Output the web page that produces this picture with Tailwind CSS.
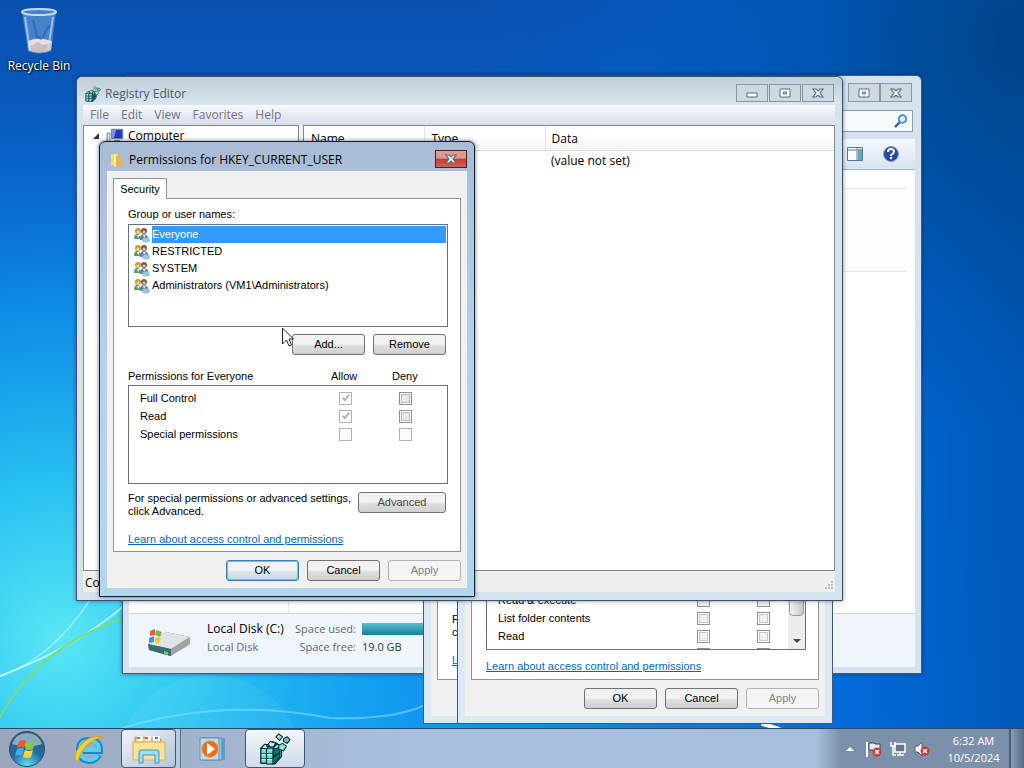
<!DOCTYPE html>
<html lang="en">
<head>
    <meta charset="UTF-8">
    <meta name="viewport" content="width=device-width, initial-scale=1.0">
    <title>Desktop - Registry Editor</title>
    <script src="https://cdn.jsdelivr.net/npm/@tailwindcss/browser@4"></script>
</head>
<body class="relative flex flex-col h-screen overflow-hidden bg-[#0a5fc8] font-['Open_Sans','Noto_Sans',sans-serif] text-xs text-black">

    <!-- Shared icons -->
    <svg class="hidden" aria-hidden="true">
        <symbol id="icon-registry" viewBox="0 0 34 34">
            <g stroke="#062c30" stroke-width="1.1" stroke-linejoin="round">
                <path d="m2 16 4-4 5 1 3-4 5 2 5 3v11l-7 8-15-1Z" fill="#2fa9a2"/>
                <path d="m2 16 4-4 5 1-3 4Zm6-2 4-5 6 2-3 4Zm7 2 4-4 5 2-4 4Z" fill="#b9f3ec"/>
                <path d="M2 17h6v5H2Zm0 5h6v5H2Zm0 5h6v5H2Zm6-10h7v5H8Zm0 5h7v5H8Zm0 5h7v6H8Z" fill="#6fdcd2"/>
                <path d="m15 19 7-5v7l-7 4Zm0 7 7-5v5l-7 7Z" fill="#0d7477"/>
                <path d="m18 4 3-3 4 3-3 4Z" fill="#b4d5d8"/>
                <path d="m26 6 4-2 3 3-3 4-4-2Z" fill="#59c8c0"/>
                <path d="m21 13 4-2 4 3-3 5-5-2Z" fill="#8be8de"/>
            </g>
            <path d="m3 18 4 0M3 23h4M3 28h4M9 18h5M9 23h5M9 28h5" stroke="#dffffa" stroke-width="1.2"/>
        </symbol>
        <symbol id="icon-users" viewBox="0 0 16 16">
            <path d="M0 12q0-5 3-5 4 0 4 5Z" fill="#5e9c63"/>
            <path d="M6 13q0-6 4-6t5 6Z" fill="#4f83ad"/>
            <circle cx="4" cy="4" r="3" fill="#c89a3c"/>
            <circle cx="4" cy="5" r="1.500" fill="#f3d9a4"/>
            <circle cx="10" cy="4" r="3" fill="#7b5e48"/>
            <circle cx="10" cy="5" r="1.500" fill="#e8c39a"/>
            <path d="m3 8 1 3 2-3Zm6 0 1 3 2-3Z" fill="#e8f2f2"/>
            <ellipse cx="12" cy="13" rx="4" ry="2.500" fill="#9cc4dd"/>
        </symbol>
        <symbol id="icon-max" viewBox="0 0 12 10">
            <path d="M1 1h10v8H1Z" fill="#fff" stroke="#5c6a7c"/>
            <path d="M4.500 4h3v2h-3Z" fill="#dbe6ee" stroke="#5c6a7c"/>
        </symbol>
        <symbol id="icon-close" viewBox="0 0 12 10">
            <path d="M1 1h3l2 2 2-2h3L8 5l3 4H8L6 7 4 9H1l3-4Z" fill="#fff" stroke="#5c6a7c" stroke-width="1.200"/>
        </symbol>
    </svg>

    <!-- Wallpaper -->
    <svg class="absolute inset-0 w-full h-full" viewBox="0 0 1024 768" preserveAspectRatio="none" aria-hidden="true">
        <defs>
            <linearGradient id="sky" x1="0" y1="0" x2="0" y2="1">
                <stop offset="0" stop-color="#0a4fae"/>
                <stop offset=".3" stop-color="#0868d0"/>
                <stop offset=".6" stop-color="#0a86e6"/>
                <stop offset="1" stop-color="#14a0f6"/>
            </linearGradient>
            <radialGradient id="glow" gradientUnits="userSpaceOnUse" cx="60" cy="640" r="520">
                <stop offset="0" stop-color="#5ae6f4"/>
                <stop offset=".3" stop-color="#2cc8f2" stop-opacity=".9"/>
                <stop offset=".65" stop-color="#129cee" stop-opacity=".6"/>
                <stop offset="1" stop-color="#0a6ad2" stop-opacity="0"/>
            </radialGradient>
            <linearGradient id="shade" x1="0" y1="0" x2="1" y2="0">
                <stop offset=".45" stop-color="#0058bc" stop-opacity="0"/>
                <stop offset=".82" stop-color="#0066d8" stop-opacity=".9"/>
                <stop offset="1" stop-color="#0058b8"/>
            </linearGradient>
            <radialGradient id="corner" gradientUnits="userSpaceOnUse" cx="1024" cy="40" r="400">
                <stop offset="0" stop-color="#004488"/>
                <stop offset="1" stop-color="#004a98" stop-opacity="0"/>
            </radialGradient>
        </defs>
        <path d="M0 0h1024v768H0Z" fill="url(#sky)"/>
        <path d="M0 0h1024v768H0Z" fill="url(#glow)"/>
        <path d="M0 0h1024v768H0Z" fill="url(#shade)"/>
        <path d="M0 0h1024v768H0Z" fill="url(#corner)"/>
        <circle cx="210" cy="770" r="95" fill="#fff" opacity=".06"/>
        <g fill="none" stroke-linecap="round">
            <path d="M0 676Q50 660 90 600" stroke="#c9f8fc" stroke-width="2" opacity=".5"/>
            <path d="M0 676Q75 648 125 605" stroke="#d5fafa" stroke-width="2" opacity=".7"/>
            <path d="M0 717Q40 645 125 618" stroke="#79df72" stroke-width="2"/>
            <path d="M110 732Q215 696 330 718Q390 720 423 706" stroke="#8fe6fb" stroke-width="2" opacity=".5"/>
            <path d="M763 724l16 5" stroke="#fff" stroke-width="4"/>
        </g>
    </svg>

    <main class="relative flex-1">

        <!-- Desktop shortcut -->
        <div class="absolute left-0 top-2 w-[78px] flex flex-col items-center">
            <svg class="w-10 h-12" viewBox="0 0 40 48" aria-hidden="true">
                <path d="M3 4h34l-5 39q-12 5-23 0Z" fill="#79a9df" fill-opacity=".55"/>
                <path d="m9 33q10-5 24 0l-1 9q-12 5-22 0Z" fill="#e9dfe4"/>
                <path d="m11 38 8-4 5 3 8-2v7q-11 4-21 1Z" fill="#cdbfb7"/>
                <path d="M6 9l5 34M34 9l-5 33" stroke="#d5e8fb" stroke-width="2" opacity=".6"/>
                <path d="m14 12 4 17 5 2M31 17q-5 6-7 12" stroke="#2c5ca8" stroke-width="2" fill="none" opacity=".7"/>
                <ellipse cx="20" cy="4" rx="17" ry="3" fill="#497fc5" stroke="#c6d9ec" stroke-width="2"/>
            </svg>
            <span class="text-[12px] leading-5 text-white [text-shadow:1px_1px_2px_#000,0_0_2px_#000]">Recycle Bin</span>
        </div>

        <!-- Windows Explorer -->
        <section class="absolute left-[122px] top-[75px] w-[800px] h-[599px] flex flex-col rounded-t-md border border-[#3d5a78] bg-[#d6e3ee] px-[6px] pb-[6px] shadow-[0_0_4px_rgba(0,30,70,.5)]">
            <div class="flex justify-end h-[34px] pt-[7px] pr-[3px]">
                <button class="w-8 h-[19px] flex items-center justify-center border border-[#8796a5] bg-[#ccd9e3]" aria-label="Maximize"><svg class="w-3 h-2.5"><use href="#icon-max"/></svg></button>
                <button class="w-8 h-[19px] flex items-center justify-center border border-[#8796a5] bg-[#ccd9e3]" aria-label="Close"><svg class="w-3 h-2.5"><use href="#icon-close"/></svg></button>
            </div>
            <div class="flex justify-end pr-0.5 h-[29px]">
                <div class="w-48 h-[22px] flex items-center justify-between border border-[#8d9eb0] bg-[#f5fafd] px-1">
                    <input class="w-40 outline-none" type="text" aria-label="Search">
                    <svg class="w-3.5 h-3.5" viewBox="0 0 14 14" fill="none" aria-hidden="true"><path d="m1 13 5-5" stroke="#3f6c94" stroke-width="2.500"/><circle cx="8.500" cy="5" r="3.800" fill="#d9efff" stroke="#4d86c0" stroke-width="1.800"/></svg>
                </div>
            </div>
            <div class="flex items-center justify-end gap-5 h-[31px] pr-4 border-b border-[#a0b4c8] bg-linear-to-b from-[#f4f9fd] to-[#d6e4f2]">
                <button aria-label="Show the preview pane">
                    <svg class="w-4 h-[14px]" viewBox="0 0 16 14"><path d="M.5.5h15v13H.5Z" fill="#fff" stroke="#537891"/><path d="M0 3h10M10 0v14" stroke="#537891"/><path d="M11 2h4v11h-4Z" fill="#57aebb"/></svg>
                </button>
                <button aria-label="Get help">
                    <svg class="w-4 h-4" viewBox="0 0 16 16"><circle cx="8" cy="8" r="7.500" fill="#274a9a" stroke="#8f9dc0"/><path d="M5 6q0-3 3-3t3 2.500Q11 7 8 9v1" fill="none" stroke="#fff" stroke-width="2"/><circle cx="8" cy="12" r="1.200" fill="#fff"/></svg>
                </button>
            </div>
            <div class="flex flex-1 bg-white">
                <div class="w-40 border-r border-[#e2e6ee]"></div>
                <div class="flex-1 pr-2 pt-[18px]">
                    <div class="h-[84px] border-y border-[#e6e6e8] bg-[#fdfdfd]"></div>
                </div>
            </div>
            <div class="flex items-center h-[54px] pl-4 border-t border-[#ccd6e2] bg-[#f0f5fb]">
                <svg class="w-[46px] h-8 mr-4" viewBox="0 0 46 32" aria-hidden="true">
                    <path d="m3 19 18-12 24 5v7L25 31 4 25Z" fill="#777f82"/>
                    <path d="m3 19 18-12 24 5-19 12Z" fill="#e1e4e5"/>
                    <path d="m3 19 23 5v7L4 25Z" fill="#3b6d70"/>
                    <path d="m26 24 19-12v7L26 31Z" fill="#9fa5a7"/>
                    <path d="m19 26 4 1v3l-4-1Z" fill="#60d45c"/>
                    <path d="m5 6 5-2v6l-5 1Z" fill="#e4633a"/><path d="m11 5 6 2-2 5-5-2Z" fill="#79b942"/>
                    <path d="m4 13 5-2v6l-5 1Z" fill="#4b90cf"/><path d="m10 12 6 1-2 6-4-2Z" fill="#f5c73d"/>
                </svg>
                <div class="self-start pt-[6px] grid grid-cols-[81px_62px_1fr] gap-x-1.5 items-center leading-[18px] text-[#5a6779] text-[11px] whitespace-nowrap">
                    <span class="text-[12px] text-black">Local Disk (C:)</span>
                    <span class="text-right">Space used:</span>
                    <span class="w-48 h-3 bg-linear-to-b from-[#55bfcd] to-[#12829a]"></span>
                    <span>Local Disk</span>
                    <span class="text-right">Space free:</span>
                    <span class="text-[#1e395b]">19.0 GB</span>
                </div>
            </div>
        </section>

        <!-- Properties, behind -->
        <section class="absolute left-[423px] top-[268px] w-[376px] h-[456px] flex flex-col border border-[#3d5a78] bg-[#dce8f2] px-[7px] pb-[7px] pt-7 font-['Liberation_Sans',Arial,sans-serif] text-[11px]">
            <div class="flex-1 bg-[#f0f0f0] px-1.5 pb-9 flex flex-col">
                <div class="flex flex-col justify-end flex-1 border border-[#8f949c] bg-white pl-3.5 pb-3 leading-[13px]">
                    <p class="w-[228px] mb-[15px]">For special permissions or advanced settings, click Advanced.</p>
                    <a href="#" class="text-[#0b63b8] underline">Learn about access control and permissions</a>
                </div>
            </div>
        </section>

        <!-- Properties, in front -->
        <section class="absolute left-[457px] top-[268px] w-[376px] h-[456px] flex flex-col border border-[#3d5a78] bg-[#dce8f2] px-[7px] pb-[7px] pt-7 font-['Liberation_Sans',Arial,sans-serif] text-[11px]">
            <div class="flex flex-col flex-1 bg-[#f0f0f0] px-1.5 pb-[7px]">
                <div class="flex flex-col justify-end flex-1 border border-[#8f949c] bg-white pl-3.5 pb-[5px]">
                    <div class="flex items-end h-[98px] w-80 overflow-hidden border border-[#6b7078]">
                        <table class="flex-1 -mb-3.5">
                            <tr class="h-[18px]"><td class="pl-[11px]">Modify</td><td class="w-[60px]"><input type="checkbox" aria-label="Modify, allow" class="block appearance-none size-[13px] border border-[#8e8f8f] bg-[#eef0f2]"></td><td class="w-[31px]"><input type="checkbox" aria-label="Modify, deny" class="block appearance-none size-[13px] border border-[#8e8f8f] bg-[#eef0f2]"></td></tr>
                            <tr class="h-[18px]"><td class="pl-[11px]">Read &amp; execute</td><td><input type="checkbox" aria-label="Read and execute, allow" class="block appearance-none size-[13px] border border-[#8e8f8f] bg-[#eef0f2]"></td><td><input type="checkbox" aria-label="Read and execute, deny" class="block appearance-none size-[13px] border border-[#8e8f8f] bg-[#eef0f2]"></td></tr>
                            <tr class="h-[18px]"><td class="pl-[11px]">List folder contents</td><td><input type="checkbox" aria-label="List folder contents, allow" class="block appearance-none size-[13px] border border-[#8e8f8f] bg-[#eef0f2] shadow-[inset_0_0_0_1px_#fff,inset_0_0_0_2px_#c4c8cc]"></td><td><input type="checkbox" aria-label="List folder contents, deny" class="block appearance-none size-[13px] border border-[#8e8f8f] bg-[#eef0f2] shadow-[inset_0_0_0_1px_#fff,inset_0_0_0_2px_#c4c8cc]"></td></tr>
                            <tr class="h-[18px]"><td class="pl-[11px]">Read</td><td><input type="checkbox" aria-label="Read, allow" class="block appearance-none size-[13px] border border-[#8e8f8f] bg-[#eef0f2] shadow-[inset_0_0_0_1px_#fff,inset_0_0_0_2px_#c4c8cc]"></td><td><input type="checkbox" aria-label="Read, deny" class="block appearance-none size-[13px] border border-[#8e8f8f] bg-[#eef0f2] shadow-[inset_0_0_0_1px_#fff,inset_0_0_0_2px_#c4c8cc]"></td></tr>
                            <tr class="h-[18px]"><td></td><td><input type="checkbox" aria-label="Write, allow" class="block appearance-none size-[13px] border border-[#8e8f8f] bg-[#eef0f2]"></td><td><input type="checkbox" aria-label="Write, deny" class="block appearance-none size-[13px] border border-[#8e8f8f] bg-[#eef0f2]"></td></tr>
                        </table>
                        <div class="self-stretch flex flex-col justify-between items-center w-[17px] bg-[#ececee] pb-1">
                            <div class="w-[15px] h-[63px] rounded-sm border border-[#9a9a9a] bg-linear-to-r from-[#f3f3f3] to-[#c8c8cc]"></div>
                            <svg class="w-2 h-2" viewBox="0 0 8 8"><path d="M0 2h8L4 6Z" fill="#444"/></svg>
                        </div>
                    </div>
                    <a href="#" class="self-start mt-[9px] leading-[15px] text-[#0b63b8] underline">Learn about access control and permissions</a>
                </div>
                <div class="flex justify-end gap-2 pt-2">
                    <button class="w-[73px] h-[21px] rounded-[3px] border border-[#707070] bg-linear-to-b from-[#f2f2f2] from-45% via-[#dddddd] via-60% to-[#d0d0d0]">OK</button>
                    <button class="w-[73px] h-[21px] rounded-[3px] border border-[#707070] bg-linear-to-b from-[#f2f2f2] from-45% via-[#dddddd] via-60% to-[#d0d0d0]">Cancel</button>
                    <button class="w-[73px] h-[21px] rounded-[3px] border border-[#adb2b5] bg-[#f4f4f4] text-[#838383]" disabled>Apply</button>
                </div>
            </div>
        </section>

        <!-- Registry Editor -->
        <section class="absolute left-[76px] top-[76px] w-[767px] h-[525px] flex flex-col rounded-t-md border border-[#3d5268] bg-[#d5e3ed] pl-[6px] pr-[7px] pb-2 shadow-[0_0_4px_rgba(0,30,70,.5)]">
            <header class="flex items-start justify-between -ml-[6px] -mr-[7px] px-2 h-7 rounded-t-md bg-linear-to-b from-[#bfcdda] to-[#d8e6ee]">
                <div class="flex items-center gap-1 pt-[9px] text-[#4d5a66]">
                    <svg class="w-4 h-4"><use href="#icon-registry"/></svg>
                    <h1 class="leading-4">Registry Editor</h1>
                </div>
                <div class="flex gap-px pt-[7px]">
                    <button class="w-8 h-[18px] flex items-center justify-center border border-[#8796a5] bg-[#ccd9e3]" aria-label="Minimize"><svg class="w-3 h-2.5" viewBox="0 0 12 10"><path d="M1 5h10v4H1Z" fill="#fff" stroke="#5c6a7c"/></svg></button>
                    <button class="w-8 h-[18px] flex items-center justify-center border border-[#8796a5] bg-[#ccd9e3]" aria-label="Maximize"><svg class="w-3 h-2.5"><use href="#icon-max"/></svg></button>
                    <button class="w-8 h-[18px] flex items-center justify-center border border-[#8796a5] bg-[#ccd9e3]" aria-label="Close"><svg class="w-3 h-2.5"><use href="#icon-close"/></svg></button>
                </div>
            </header>
            <nav class="flex gap-3 h-5 pl-[7px] leading-5 text-[#73737b] bg-linear-to-b from-[#f8fafe] to-[#d8dcec]">
                <button>File</button>
                <button>Edit</button>
                <button>View</button>
                <button>Favorites</button>
                <button>Help</button>
            </nav>
            <div class="flex flex-1 gap-1 min-h-0 bg-[#f0f0f0]">
                <div class="w-[216px] border border-[#828790] bg-white pl-2">
                    <div class="flex items-center h-5">
                        <svg class="w-2 h-2 mr-1.5" viewBox="0 0 8 8"><path d="M7 1v6H1Z" fill="#333"/></svg>
                        <svg class="w-[18px] h-4 mr-1" viewBox="0 0 18 16"><path d="M1 5h3v10H1Z" fill="#ddd" stroke="#888"/><path d="M5 1h12v10H5Z" fill="#2438b8" stroke="#c0c4cc"/><path d="M6 2h4l-2 8H6Z" fill="#7a94ea"/><path d="M8 12h6v2H8Z" fill="#888"/></svg>
                        <span class="text-[12px]">Computer</span>
                    </div>
                </div>
                <div class="flex-1 border border-[#828790] bg-white">
                    <table class="w-full table-fixed text-left">
                        <thead>
                            <tr class="h-6 bg-linear-to-b from-white from-50% to-[#f3f3f4] border-b border-[#dcdcdf]">
                                <th class="w-[120px] pl-[7px] pt-0.5 font-normal border-r border-[#e2e3e6]">Name</th>
                                <th class="w-[121px] pl-[7px] pt-0.5 font-normal border-r border-[#e2e3e6]">Type</th>
                                <th class="pl-1.5 pt-0.5 font-normal">Data</th>
                            </tr>
                        </thead>
                        <tbody>
                            <tr class="h-[22px]"><td></td><td></td><td class="pl-1.5">(value not set)</td></tr>
                        </tbody>
                    </table>
                </div>
            </div>
            <footer class="flex justify-between h-[21px] pl-0.5 leading-6 bg-[#f0eff0]">
                <span>Computer</span>
                <svg class="w-3 h-3 mt-2" viewBox="0 0 12 12" fill="#c4c0c4"><path d="M8 2h2v2H8ZM5 5h2v2H5Zm3 0h2v2H8ZM2 8h2v2H2Zm3 0h2v2H5Zm3 0h2v2H8Z"/></svg>
            </footer>
        </section>

        <!-- Permissions dialog -->
        <section class="absolute left-[99px] top-[141px] w-[376px] h-[456px] flex flex-col rounded-t-md border border-[#10202e] bg-linear-to-b from-[#a8bdd5] via-[#bacfe9] to-[#b1d7ec] px-[7px] pb-2 shadow-[0_0_4px_rgba(0,20,50,.6)]">
            <header class="flex items-start justify-between h-[29px] pl-0.5">
                <div class="flex items-center gap-1 pt-[10px]">
                    <svg class="w-4 h-4" viewBox="0 0 16 16" aria-hidden="true"><path d="M2 2h7v12l-7-1Z" fill="#f6d978"/><path d="M7 4h6v10l-6 1Z" fill="#e3b84d"/><path d="M5 3h2v12l-2-1Z" fill="#fff1b6"/></svg>
                    <h2 class="leading-4">Permissions for HKEY_CURRENT_USER</h2>
                </div>
                <button class="flex items-center justify-center w-8 h-[18px] mt-2 border border-[#591c1c] bg-linear-to-b from-[#dc9a91] from-45% via-[#bf3e30] via-50% to-[#d0604f]" aria-label="Close"><svg class="w-3 h-2.5"><use href="#icon-close"/></svg></button>
            </header>
            <div class="flex flex-col flex-1 bg-[#f0f0f0] px-1.5 pt-[7px] pb-[7px] font-['Liberation_Sans',Arial,sans-serif] text-[11px] leading-[13px]">
                <button class="relative z-10 -mb-px w-[54px] h-[21px] border border-b-0 border-[#8f949c] bg-white">Security</button>
                <div class="flex-1 border border-[#8f949c] bg-white pl-3.5 pr-3 pt-[9px]">
                    <p>Group or user names:</p>
                    <ul class="mt-[3px] w-80 h-[103px] border border-[#6b7078] p-px leading-[17px]">
                        <li class="flex items-center pl-1"><svg class="w-4 h-4 mr-0.5"><use href="#icon-users"/></svg><span class="flex-1 bg-[#3399ff] text-white">Everyone</span></li>
                        <li class="flex items-center pl-1"><svg class="w-4 h-4 mr-0.5"><use href="#icon-users"/></svg>RESTRICTED</li>
                        <li class="flex items-center pl-1"><svg class="w-4 h-4 mr-0.5"><use href="#icon-users"/></svg>SYSTEM</li>
                        <li class="flex items-center pl-1"><svg class="w-4 h-4 mr-0.5"><use href="#icon-users"/></svg>Administrators (VM1\Administrators)</li>
                    </ul>
                    <div class="flex justify-end gap-2 pt-[7px] pr-0.5">
                        <button class="w-[73px] h-[21px] rounded-[3px] border border-[#707070] bg-linear-to-b from-[#f2f2f2] from-45% via-[#dddddd] via-60% to-[#d0d0d0]">Add...</button>
                        <button class="w-[73px] h-[21px] rounded-[3px] border border-[#707070] bg-linear-to-b from-[#f2f2f2] from-45% via-[#dddddd] via-60% to-[#d0d0d0]">Remove</button>
                    </div>
                    <div class="flex pt-[15px] pb-0.5 whitespace-nowrap">
                        <span class="w-[203px]">Permissions for Everyone</span>
                        <span class="w-[61px]">Allow</span>
                        <span>Deny</span>
                    </div>
                    <div class="w-80 h-[99px] border border-[#6b7078] pt-[3px]">
                        <table class="w-full">
                            <tr class="h-[18px]">
                                <td class="pl-[11px]">Full Control</td>
                                <td class="w-[60px]"><input type="checkbox" checked disabled aria-label="Full Control, allow" class="grid place-items-center appearance-none size-[13px] border border-[#b1b1b1] bg-[#fbfbfb] before:w-1 before:h-2 before:mb-0.5 before:rotate-40 before:border-r-2 before:border-b-2 before:border-[#b4b4b8]"></td>
                                <td class="w-12"><input type="checkbox" aria-label="Full Control, deny" class="block appearance-none size-[13px] border border-[#8e8f8f] bg-[#e6e8ea] shadow-[inset_0_0_0_1px_#fff,inset_0_0_0_2px_#b6b9bc]"></td>
                            </tr>
                            <tr class="h-[18px]">
                                <td class="pl-[11px]">Read</td>
                                <td><input type="checkbox" checked disabled aria-label="Read, allow" class="grid place-items-center appearance-none size-[13px] border border-[#b1b1b1] bg-[#fbfbfb] before:w-1 before:h-2 before:mb-0.5 before:rotate-40 before:border-r-2 before:border-b-2 before:border-[#b4b4b8]"></td>
                                <td><input type="checkbox" aria-label="Read, deny" class="block appearance-none size-[13px] border border-[#8e8f8f] bg-[#e6e8ea] shadow-[inset_0_0_0_1px_#fff,inset_0_0_0_2px_#b6b9bc]"></td>
                            </tr>
                            <tr class="h-[18px]">
                                <td class="pl-[11px]">Special permissions</td>
                                <td><input type="checkbox" disabled aria-label="Special permissions, allow" class="block appearance-none size-[13px] border border-[#b1b1b1] bg-[#fbfbfb]"></td>
                                <td><input type="checkbox" disabled aria-label="Special permissions, deny" class="block appearance-none size-[13px] border border-[#b1b1b1] bg-[#fbfbfb]"></td>
                            </tr>
                        </table>
                    </div>
                    <div class="flex items-start justify-between pt-2 pr-0.5">
                        <p class="w-[228px]">For special permissions or advanced settings, click Advanced.</p>
                        <button class="w-[88px] h-[21px] rounded-[3px] border border-[#707070] bg-linear-to-b from-[#f2f2f2] from-45% via-[#dddddd] via-60% to-[#d0d0d0] text-[#444]">Advanced</button>
                    </div>
                    <a href="#" class="inline-block mt-[15px] text-[#0b63b8] underline">Learn about access control and permissions</a>
                </div>
                <div class="flex justify-end gap-2 pt-2">
                    <button class="w-[73px] h-[21px] rounded-[3px] border border-[#3c7fb1] bg-linear-to-b from-[#f0f4f5] from-45% via-[#d5e4ea] via-60% to-[#c8dde5] shadow-[inset_0_0_0_1px_#4ccdf2]">OK</button>
                    <button class="w-[73px] h-[21px] rounded-[3px] border border-[#707070] bg-linear-to-b from-[#f2f2f2] from-45% via-[#dddddd] via-60% to-[#d0d0d0]">Cancel</button>
                    <button class="w-[73px] h-[21px] rounded-[3px] border border-[#adb2b5] bg-[#f4f4f4] text-[#838383]" disabled>Apply</button>
                </div>
            </div>
        </section>

        <!-- Mouse pointer -->
        <svg class="absolute left-[282px] top-[327px] w-3 h-5" viewBox="0 0 12 20" aria-hidden="true"><path d="M.5 1v16l4-4 2.500 6 2.500-1-2.500-6h4.500Z" fill="#fff" stroke="#222"/></svg>
    </main>

    <!-- Taskbar -->
    <footer class="relative flex items-stretch justify-between h-10 border-t border-[#24496b] bg-linear-to-r from-[#9ba6be] via-[#a8c0dc] via-40% to-[#a6bfda] text-[11px]">
        <div class="flex gap-0.5">
            <button class="w-[57px] pr-1 flex items-center justify-center" aria-label="Start">
                <svg class="w-[38px] h-[38px]" viewBox="0 0 38 38">
                    <defs><radialGradient id="orb" cx=".5" cy=".95" r=".9"><stop offset="0" stop-color="#5de1f1"/><stop offset=".5" stop-color="#1d6ea4"/><stop offset="1" stop-color="#3a5a78"/></radialGradient></defs>
                    <circle cx="19" cy="19" r="17.500" fill="url(#orb)" stroke="#204f70"/>
                    <path d="M4 14Q8 3 19 3t15 11q-15 5-30 0Z" fill="#d5e8ee" opacity=".55"/>
                    <path d="M11 11q4-2 7 0l-2 7q-3-2-7 0Z" fill="#ef5a24"/>
                    <path d="M19 12q4 2 8-1l-2 8q-4 2-8 0Z" fill="#8cc63c"/>
                    <path d="M9 19q4-2 7 0l-2 7q-3-2-7 0Z" fill="#4aa6e6"/>
                    <path d="M17 20q4 2 8 0l-2 7q-4 2-8 0Z" fill="#fdd436"/>
                </svg>
            </button>
            <button class="w-[60px] flex items-center justify-center" aria-label="Internet Explorer">
                <svg class="w-8 h-8" viewBox="0 0 32 32" fill="none">
                    <path d="M26 22q-3 6-10 6-10-1-10-11T16 7q11 0 11 11H10" stroke="#1a8ac4" stroke-width="6"/>
                    <path d="M25 22q-3 5-9 5-9-1-9-10t9-9q10 0 10 9H10" stroke="#5fcdf2" stroke-width="4"/>
                    <path d="M5 29Q-2 25 7 13T30 4Q21 5 14 12T5 29Z" fill="#f5cf3a" stroke="#d5a51a"/>
                </svg>
            </button>
            <div class="flex w-[60px]">
                <button class="w-[55px] flex items-center justify-center rounded-sm border border-[#41566f] bg-linear-to-br from-[#eef3f9] to-[#b4c4da]" aria-label="Windows Explorer">
                    <svg class="w-[34px] h-[30px]" viewBox="0 0 34 30">
                        <path d="M3 3h10l2 2h14v20H3Z" fill="#e7c667" stroke="#bd9b45"/>
                        <path d="M5 2h6v5H5Zm8 0h6v5h-6Zm8 0h7v5h-7Z" fill="#fff"/>
                        <path d="M5 3h3v2H5Z" fill="#45a055"/><path d="M13 3h3v2h-3Z" fill="#d14f3b"/><path d="M23 3h3v2h-3Z" fill="#427cc2"/>
                        <path d="M1 8h32v18H1Z" fill="#f8e494" stroke="#d3b354"/>
                        <path d="M7 29V18q0-2 2-2h16q2 0 2 2v11h-4v-8H11v8Z" fill="#9fdcf2" stroke="#3f95bd"/>
                    </svg>
                </button>
                <div class="w-[5px] border-r border-[#586f8a] bg-[#b9c9dd]"></div>
            </div>
            <button class="w-[60px] flex items-center justify-center" aria-label="Windows Media Player">
                <svg class="w-7 h-6" viewBox="0 0 28 24">
                    <path d="M7 1h19v22H7Z" fill="#5f9fcb"/><path d="M4 1h19v22H4Z" fill="#8dc4e4" stroke="#4c8cb8"/><path d="M1 1h19v22H1Z" fill="#b9dcee" stroke="#5b95bb"/>
                    <circle cx="11" cy="12" r="8.500" fill="#e8701c" stroke="#f4b27c"/><path d="m8 6 8 6-8 6Z" fill="#fff"/>
                </svg>
            </button>
            <button class="w-[60px] flex items-center justify-center rounded-sm border border-[#41566f] bg-linear-to-b from-[#f3f7fa] to-[#cfdbe8]" aria-label="Registry Editor">
                <svg class="w-8 h-8"><use href="#icon-registry"/></svg>
            </button>
        </div>
        <div class="flex items-center bg-linear-to-r from-[#7d90aa]/0 to-[#7d90aa] to-12% pl-[30px] text-white">
            <svg class="w-2 h-2 mr-3" viewBox="0 0 8 8"><path d="M0 6h8L4 2Z" fill="#fff"/></svg>
            <div class="flex gap-2 mr-4">
                <svg class="w-4 h-4" viewBox="0 0 16 16"><path d="M1 1v15" stroke="#fff" stroke-width="2"/><path d="M3 2h5l1 1h5v7H8L7 9H3Z" fill="#e8edf3" stroke="#445"/><circle cx="11" cy="11" r="4.500" fill="#d8332c"/><path d="m9 9 4 4m0-4-4 4" stroke="#fff" stroke-width="1.500"/></svg>
                <svg class="w-4 h-4" viewBox="0 0 16 16" fill="none"><path d="M5 3h10v8H5Z" fill="#66758a" stroke="#fff" stroke-width="1.500"/><path d="M7 14h7M10 11v3M1 1v4h4V1M3 5v9h3" stroke="#fff" stroke-width="1.500"/></svg>
                <svg class="w-4 h-4" viewBox="0 0 16 16"><path d="M1 5h3l4-4v14l-4-4H1Z" fill="#fff" stroke="#556"/><circle cx="11" cy="10" r="4.500" fill="#d8332c"/><path d="m9 8 4 4m0-4-4 4" stroke="#fff" stroke-width="1.500"/></svg>
            </div>
            <div class="w-[55px] mr-2 text-center leading-[17px] whitespace-nowrap">
                <div>6:32 AM</div>
                <div>10/5/2024</div>
            </div>
            <button class="self-stretch w-[15px] border-l-2 border-[#4c5f78] bg-linear-to-r from-[#8b9cb2] to-[#566b86]" aria-label="Show desktop"></button>
        </div>
    </footer>

</body>
</html>
